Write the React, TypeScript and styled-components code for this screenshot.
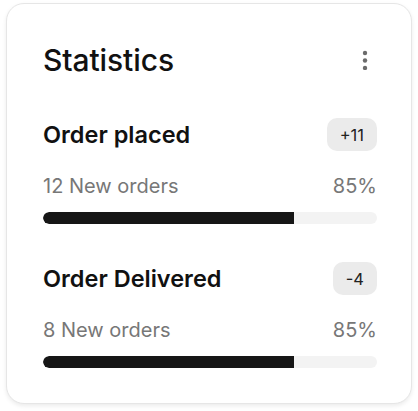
import React from "react";
import styled, { createGlobalStyle } from "styled-components";

const Global = createGlobalStyle`
  html, body { margin: 0; padding: 0; background: #ffffff; }
  body { font-family: Inter, "Noto Sans", sans-serif; color: #111111; }
`;

const Page = styled.div`
  padding: 3px 6px 7px 6px;
`;

const Card = styled.div`
  box-sizing: border-box;
  width: 406px;
  height: 401px;
  border: 1px solid #e6e6e6;
  border-radius: 18px;
  background: #ffffff;
  box-shadow: 0 2px 4px rgba(0, 0, 0, 0.08);
  padding: 38px 34px 0 36px;
  display: flex;
  flex-direction: column;
`;

const Header = styled.div`
  display: flex;
  align-items: center;
  justify-content: space-between;
  margin-bottom: 40px;
`;

const Title = styled.h2`
  margin: 0;
  font-size: 30px;
  line-height: 36px;
  font-weight: 500;
  letter-spacing: -0.1px;
  color: #111111;
`;

const MenuButton = styled.button`
  border: 0;
  background: none;
  padding: 0;
  width: 16px;
  height: 24px;
  display: flex;
  align-items: center;
  justify-content: center;
  margin-right: 4px;
`;

const Section = styled.div`
  display: flex;
  flex-direction: column;
  & + & {
    margin-top: 38px;
  }
`;

const SectionHead = styled.div`
  display: flex;
  align-items: center;
  justify-content: space-between;
  height: 33px;
`;

const SectionTitle = styled.div`
  font-size: 23.5px;
  font-weight: 600;
  line-height: 33px;
  color: #111111;
`;

const Badge = styled.span`
  box-sizing: border-box;
  height: 33px;
  min-width: 44px;
  padding: 0 13px;
  border-radius: 10px;
  background: #ebebeb;
  display: inline-flex;
  align-items: center;
  justify-content: center;
  font-size: 16.5px;
  color: #222222;
`;

const MetaRow = styled.div`
  display: flex;
  justify-content: space-between;
  align-items: baseline;
  margin-top: 23px;
  font-size: 20px;
  line-height: 24px;
  color: #777777;
`;

const Track = styled.div`
  margin-top: 14px;
  height: 12px;
  border-radius: 6px;
  background: #f3f3f3;
  overflow: hidden;
`;

const Fill = styled.div`
  height: 100%;
  background: #161616;
  border-radius: 6px 0 0 6px;
`;

const stats = [
  { title: "Order placed", badge: "+11", sub: "12 New orders", pct: "85%", fill: 75 },
  { title: "Order Delivered", badge: "-4", sub: "8 New orders", pct: "85%", fill: 75 },
];

export default function App() {
  return (
    <Page>
      <Global />
      <Card>
        <Header>
          <Title>Statistics</Title>
          <MenuButton aria-label="More">
            <svg width="6" height="20" viewBox="0 0 6 20">
              <circle cx="3" cy="3" r="2.2" fill="#6b6b6b" />
              <circle cx="3" cy="10.5" r="2.2" fill="#6b6b6b" />
              <circle cx="3" cy="18" r="2.2" fill="#6b6b6b" />
            </svg>
          </MenuButton>
        </Header>
        {stats.map((s) => (
          <Section key={s.title}>
            <SectionHead>
              <SectionTitle>{s.title}</SectionTitle>
              <Badge>{s.badge}</Badge>
            </SectionHead>
            <MetaRow>
              <span>{s.sub}</span>
              <span>{s.pct}</span>
            </MetaRow>
            <Track>
              <Fill style={{ width: `${s.fill}%` }} />
            </Track>
          </Section>
        ))}
      </Card>
    </Page>
  );
}
